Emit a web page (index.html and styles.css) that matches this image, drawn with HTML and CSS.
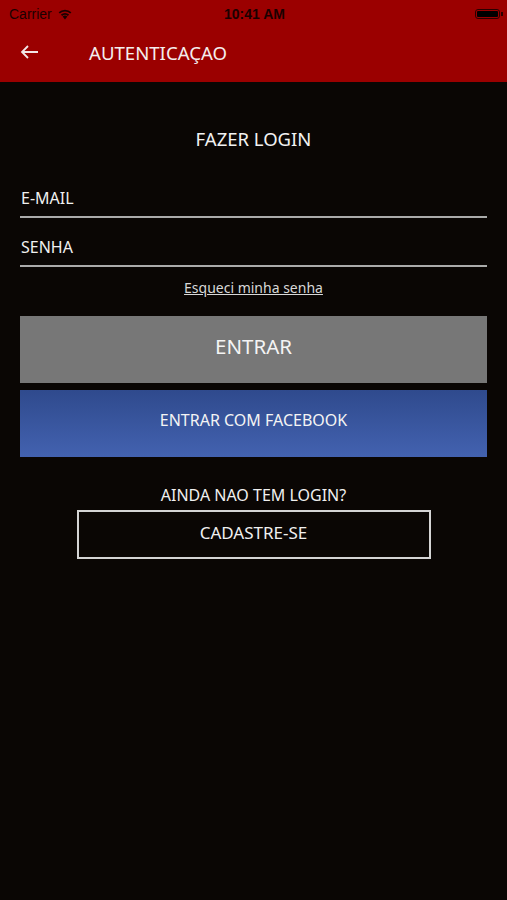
FILE: index.html
```html
<!DOCTYPE html>
<html lang="pt">
  <head>
    <meta charset="UTF-8" />
    <meta name="viewport" content="width=device-width, initial-scale=1.0" />
    <title>Autenticação</title>
    <link rel="stylesheet" href="styles.css">
  </head>
  <body>
    <header class="topbar">
      <div class="status">
        <div class="status-left">
          <span>Carrier</span>
          <svg class="wifi" width="16" height="12" viewBox="0 0 16 12">
            <path d="M8 11.5 L5.6 8.6 A3.6 3.6 0 0 1 10.4 8.6 Z" fill="#1a0000" />
            <path d="M3.9 6.6 A6.2 6.2 0 0 1 12.1 6.6 L10.9 8 A4.4 4.4 0 0 0 5.1 8 Z" fill="#1a0000" />
            <path d="M1.6 4.2 A9.4 9.4 0 0 1 14.4 4.2 L13.2 5.6 A7.6 7.6 0 0 0 2.8 5.6 Z" fill="#1a0000" />
          </svg>
        </div>
        <div class="status-time">10:41 AM</div>
        <div class="status-right">
          <span class="battery"><span class="battery-fill"></span></span>
        </div>
      </div>
      <nav class="navbar">
        <svg class="back" width="20" height="16" viewBox="0 0 20 16">
          <path d="M18 8 H2 M8 2 L2 8 L8 14" fill="none" stroke="#f2e6e6" stroke-width="1.8" />
        </svg>
        <h1 class="title">AUTENTICAÇAO</h1>
      </nav>
    </header>

    <main class="content">
      <h2 class="heading">FAZER LOGIN</h2>

      <form class="login-form">
        <input class="field" type="text" placeholder="E-MAIL" />
        <input class="field" type="password" placeholder="SENHA" />
        <a class="forgot" href="#">Esqueci minha senha</a>
        <button class="btn btn-enter" type="submit">ENTRAR</button>
        <button class="btn btn-facebook" type="button">ENTRAR COM FACEBOOK</button>
      </form>

      <p class="signup-text">AINDA NAO TEM LOGIN?</p>
      <button class="btn-signup" type="button">CADASTRE-SE</button>
    </main>
  </body>
</html>
```

FILE: styles.css
```css
body {
  margin: 0;
  background-color: #0a0604;
  color: #f0f0f0;
  font-family: "Noto Sans", Arial, sans-serif;
  min-height: 900px;
}

.topbar {
  background-color: #9b0000;
  height: 82px;
}

.status {
  height: 27px;
  display: flex;
  align-items: center;
  justify-content: space-between;
  padding: 0 7px 0 9px;
  font-family: "Liberation Sans", Arial, sans-serif;
  font-size: 14px;
  color: #1a0000;
}

.status-left {
  display: flex;
  align-items: center;
  gap: 5px;
  width: 120px;
}

.status-time {
  font-weight: bold;
}

.status-right {
  width: 120px;
  display: flex;
  justify-content: flex-end;
}

.battery {
  display: inline-block;
  width: 25px;
  height: 10px;
  border: 1px solid #2a0000;
  border-radius: 3px;
  padding: 1px;
  box-sizing: border-box;
  position: relative;
}

.battery::after {
  content: "";
  position: absolute;
  right: -4px;
  top: 2px;
  width: 2px;
  height: 4px;
  background: #2a0000;
}

.battery-fill {
  display: block;
  height: 100%;
  background: #000;
  border-radius: 1px;
}

.navbar {
  height: 55px;
  box-sizing: border-box;
  padding: 0 0 5px 20px;
  display: flex;
  align-items: center;
}

.back {
  margin-right: 49px;
}

.title {
  margin: 0;
  font-size: 18.6px;
  font-weight: normal;
  color: #f4eeee;
}

.content {
  padding: 44px 20px 0;
  text-align: center;
}

.heading {
  margin: 0 0 29px;
  font-size: 18.5px;
  font-weight: normal;
  color: #f2f2f2;
}

.login-form {
  display: flex;
  flex-direction: column;
}

.field {
  background: transparent;
  border: none;
  border-bottom: 2px solid #aaaaaa;
  color: #f0f0f0;
  font-family: inherit;
  font-size: 16px;
  padding: 0 1px;
  height: 38px;
  box-sizing: border-box;
  margin-bottom: 11px;
  outline: none;
}

.field::placeholder {
  color: #f0f0f0;
}

.forgot {
  align-self: center;
  font-size: 14px;
  color: #d8d8d8;
  margin-bottom: 19px;
}

.btn {
  border: none;
  color: #f4f4f4;
  font-family: inherit;
  width: 100%;
  height: 67px;
  padding: 0 0 8px;
  cursor: pointer;
}

.btn-enter {
  background-color: #777777;
  font-size: 20.5px;
  margin-bottom: 7px;
}

.btn-facebook {
  background: linear-gradient(to bottom, #2f4a8d, #4362b0);
  font-size: 16px;
}

.signup-text {
  margin: 27px 0 4px;
  font-size: 16px;
}

.btn-signup {
  width: 354px;
  height: 49px;
  padding: 0 0 4px;
  background: transparent;
  border: 2px solid #d4d4d4;
  color: #f0f0f0;
  font-family: inherit;
  font-size: 17px;
}
```
